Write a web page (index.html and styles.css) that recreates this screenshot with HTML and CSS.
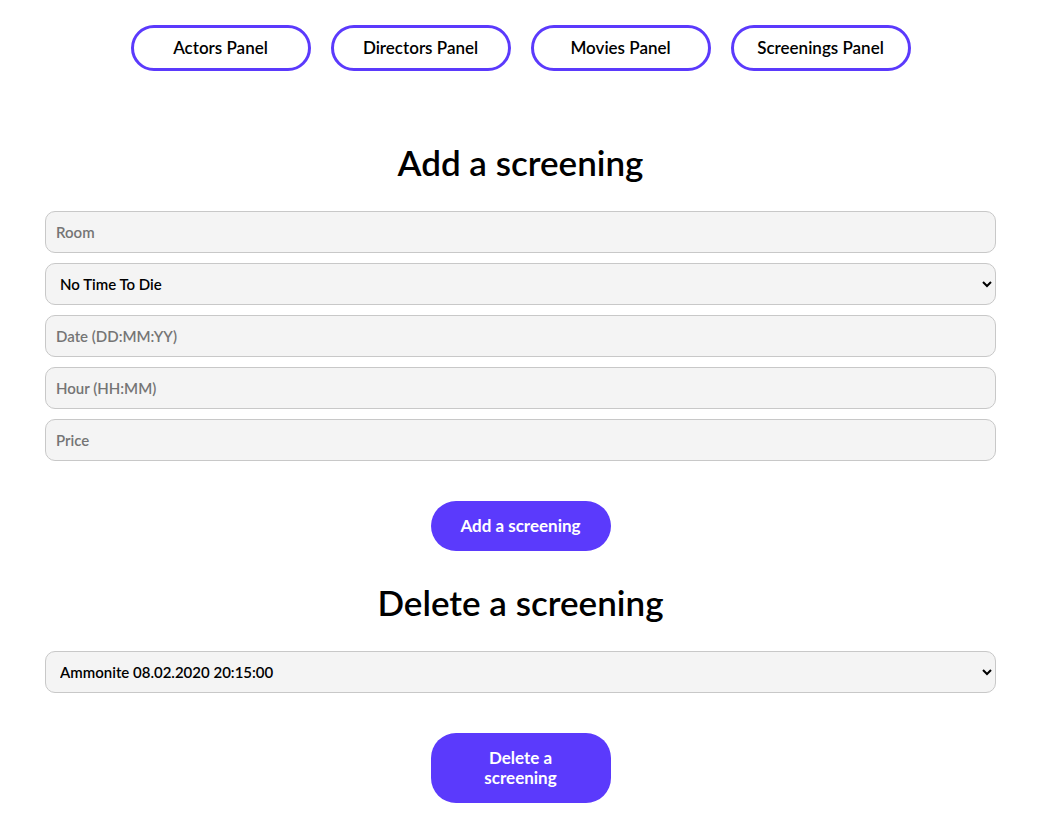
FILE: index.html
```html
<!DOCTYPE html>
<html lang="en">
<head>
<meta charset="utf-8">
<title>Screenings Panel</title>
<link rel="stylesheet" href="styles.css">
</head>
<body>
<nav class="nav">
  <button class="nav-btn">Actors Panel</button>
  <button class="nav-btn">Directors Panel</button>
  <button class="nav-btn">Movies Panel</button>
  <button class="nav-btn">Screenings Panel</button>
</nav>
<main class="main">
  <h1 class="title">Add a screening</h1>
  <form class="form">
    <input class="field" type="text" placeholder="Room">
    <select class="field field-select">
      <option>No Time To Die</option>
    </select>
    <input class="field" type="text" placeholder="Date (DD:MM:YY)">
    <input class="field" type="text" placeholder="Hour (HH:MM)">
    <input class="field" type="text" placeholder="Price">
  </form>
  <button class="action-btn">Add a screening</button>
  <h1 class="title title-delete">Delete a screening</h1>
  <form class="form">
    <select class="field field-select">
      <option>Ammonite 08.02.2020 20:15:00</option>
    </select>
  </form>
  <button class="action-btn action-tall">Delete a screening</button>
</main>
</body>
</html>
```

FILE: styles.css
```css
* { box-sizing: border-box; }
body {
  margin: 0;
  padding: 0 4px 0 7px;
  font-family: Lato, "Noto Sans", sans-serif;
  color: #000;
  background: #fff;
}
.nav {
  display: flex;
  justify-content: center;
  gap: 20px;
  padding-top: 25px;
}
.nav-btn {
  width: 180px;
  height: 46px;
  border: 3px solid #5b3afc;
  border-radius: 23px;
  background: #fff;
  font-family: inherit;
  font-size: 17px;
  font-weight: 600;
  color: #000;
  padding: 0 0 2px;
}
.main {
  width: 951px;
  margin: 0 auto;
  display: flex;
  flex-direction: column;
  align-items: center;
}
.title {
  margin: 72px 0 30px;
  font-size: 35px;
  font-weight: 600;
  line-height: 38px;
}
.title-delete {
  margin: 32px 0 30px;
}
.form {
  width: 100%;
  display: flex;
  flex-direction: column;
  gap: 10px;
}
.field {
  width: 100%;
  height: 42px;
  border: 1px solid #c8c8c8;
  border-radius: 10px;
  background: #f4f4f4;
  padding: 0 10px;
  font-family: inherit;
  font-size: 15px;
  font-weight: 600;
  color: #000;
}
.field::placeholder { color: #757575; }
.field-select { padding: 0 8px 0 10px; }
.action-btn {
  margin-top: 40px;
  width: 180px;
  height: 50px;
  border: none;
  border-radius: 25px;
  background: #5b3afc;
  color: #fff;
  font-family: inherit;
  font-size: 17px;
  font-weight: 700;
  padding: 0 0 2px;
}
.action-tall {
  height: 70px;
  padding: 0 40px;
  line-height: 20px;
}
```
